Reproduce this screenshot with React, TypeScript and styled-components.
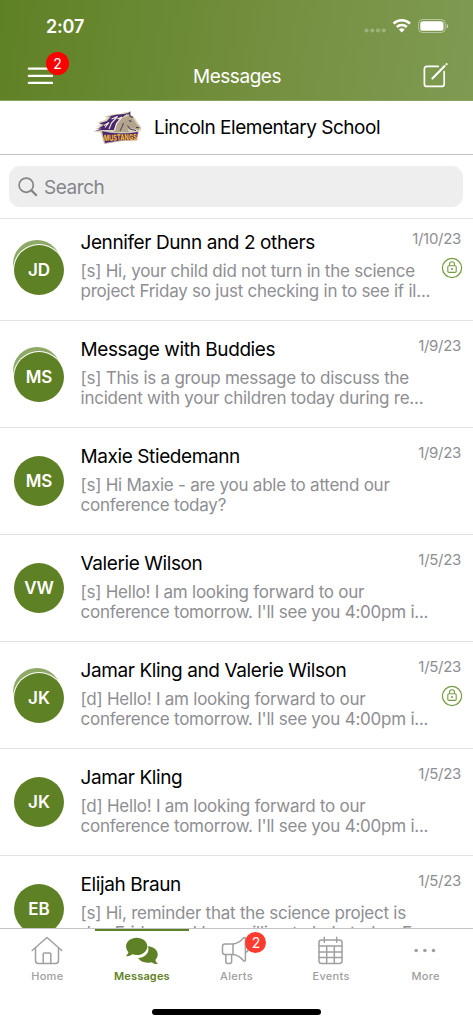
import React from 'react';
import styled, { createGlobalStyle } from 'styled-components';

interface IMessage {
  initials: string;
  title: string;
  date: string;
  lines: string[];
  group?: boolean;
  locked?: boolean;
}

const messages: IMessage[] = [
  {
    initials: 'JD',
    title: 'Jennifer Dunn and 2 others',
    date: '1/10/23',
    lines: [
      '[s] Hi, your child did not turn in the science',
      'project Friday so just checking in to see if il...',
    ],
    group: true,
    locked: true,
  },
  {
    initials: 'MS',
    title: 'Message with Buddies',
    date: '1/9/23',
    lines: [
      '[s] This is a group message to discuss the',
      'incident with your children today during re...',
    ],
    group: true,
  },
  {
    initials: 'MS',
    title: 'Maxie Stiedemann',
    date: '1/9/23',
    lines: ['[s] Hi Maxie - are you able to attend our', 'conference today?'],
  },
  {
    initials: 'VW',
    title: 'Valerie Wilson',
    date: '1/5/23',
    lines: [
      '[s] Hello! I am looking forward to our',
      "conference tomorrow. I'll see you 4:00pm i...",
    ],
  },
  {
    initials: 'JK',
    title: 'Jamar Kling and Valerie Wilson',
    date: '1/5/23',
    lines: [
      '[d] Hello! I am looking forward to our',
      "conference tomorrow. I'll see you 4:00pm i...",
    ],
    group: true,
    locked: true,
  },
  {
    initials: 'JK',
    title: 'Jamar Kling',
    date: '1/5/23',
    lines: [
      '[d] Hello! I am looking forward to our',
      "conference tomorrow. I'll see you 4:00pm i...",
    ],
  },
  {
    initials: 'EB',
    title: 'Elijah Braun',
    date: '1/5/23',
    lines: [
      '[s] Hi, reminder that the science project is',
      'due Friday and I am willing to help today. F...',
    ],
  },
];

const StatusIcons = () => (
  <svg width="86" height="18" viewBox="0 0 86 18" fill="none">
    <g fill="#fff" opacity="0.27">
      <circle cx="3.500" cy="13.500" r="2.100" />
      <circle cx="9.300" cy="13.500" r="2.100" />
      <circle cx="15" cy="13.500" r="2.100" />
      <circle cx="20.700" cy="13.500" r="2.100" />
    </g>
    <g stroke="#fff" strokeWidth="2.600">
      <path d="M30.600 6.600a11.800 11.800 0 0 1 16.400 0" />
      <path d="M33.800 10a7.200 7.200 0 0 1 10 0" />
    </g>
    <path d="M38.800 15.600l-2.900-3a4.200 4.200 0 0 1 5.800 0z" fill="#fff" />
    <rect x="55.600" y="2.500" width="26.600" height="13" rx="4" stroke="#fff" opacity="0.45" />
    <rect x="57.300" y="4.200" width="23.200" height="9.600" rx="2.600" fill="#fff" />
    <path d="M83.600 7v4.400c1-.4 1.500-1.200 1.500-2.200s-.5-1.800-1.500-2.200z" fill="#fff" opacity="0.6" />
  </svg>
);

const MenuIcon = () => (
  <svg width="27" height="18" viewBox="0 0 27 18" stroke="#fff" strokeWidth="2.200" strokeLinecap="round">
    <path d="M2.800 1.700H26M2.800 8.900H26M2.800 15.900H26" />
  </svg>
);

const ComposeIcon = () => (
  <svg width="26" height="26" viewBox="0 0 26 26" fill="none" stroke="#fff" strokeWidth="1.700" strokeLinecap="round">
    <path d="M16.200 3.400H4.900a2.500 2.500 0 0 0-2.500 2.500v15a2.500 2.500 0 0 0 2.500 2.500h14.800a2.500 2.500 0 0 0 2.500-2.500V8.600" />
    <path d="M10.400 15.600L22.600 3" strokeWidth="2.100" />
    <circle cx="24.500" cy="1.200" r="0.500" strokeWidth="1.200" />
  </svg>
);

const SchoolLogo = () => (
  <svg width="50" height="34" viewBox="0 0 50 34" overflow="visible">
    <path
      d="M0 20.500l6-2-4-.5 6-2.500-5-.3 6.500-2.700-5.500-1 8-2.500 2-2.500-3-.5 8-2.500 8-.8 6-1.700L37.500.8v3.500l3.500 1.500 3.500 5.500 4 5-.5 3-2.500 1.500-1 9-15 .3-18.500 3L7.500 21.500z"
      fill="#dcd3bd"
    />
    <path
      d="M2 20l7-2.500-4 .3 6-4-5-1.300 8-2.500 4-4.500-4 .2 9-2 8-.7 5-1.200L31 5l-4 3.500-4 5-2 5.500H9z"
      fill="#49276f"
    />
    <path d="M28 7.500l8-3 4 2.500 3 5 3.800 4.500-1.300 2.500-5-1.500-6 .2 1.500 3.300H21l2-7.500z" fill="#b3a58c" />
    <path d="M18.500 8l6-2.500-6 6.500-2.500 6M24.500 8l4.500-2-5.500 6.500-2 7M11 14.500l5-3-4 5" stroke="#eee7da" strokeWidth="1.200" fill="none" />
    <path d="M34.500 3.500l2.300-2v3.300l3.200 1.700M43 16.500l3.200.2M36 9.500l2.500 1" stroke="#4a3558" strokeWidth="1.100" fill="none" />
    <path d="M30.500 12l-1.500 4-2 4M34.500 14.500l2.500 3.500 6 1.500" stroke="#5c486b" strokeWidth="1.100" fill="none" />
    <path d="M8.500 19.700q19 4.300 37 .8l-1.800 8.500q-16-.3-32 3.500z" fill="#49276f" stroke="#dcd3bd" strokeWidth="0.700" />
    <LogoText x="27.300" y="29.500" textLength="33" lengthAdjust="spacingAndGlyphs" transform="rotate(-2 27 27)">
      MUSTANGS
    </LogoText>
  </svg>
);

const SearchIcon = () => (
  <svg width="20" height="20" viewBox="0 0 20 20" fill="none" stroke="#85858a" strokeLinecap="round">
    <circle cx="8.200" cy="8.200" r="7.100" strokeWidth="1.700" />
    <path d="M13.600 13.600l4.600 4.500" strokeWidth="2.200" />
  </svg>
);

const LockIcon = () => (
  <svg width="22" height="22" viewBox="0 0 22 22" fill="none" stroke="#759a3e">
    <circle cx="11" cy="11" r="9.600" strokeWidth="1.200" />
    <rect x="6.800" y="8.800" width="8.400" height="6.600" rx="1.200" strokeWidth="1.100" />
    <path d="M8.500 8.800V7.300a2.500 2.500 0 0 1 5 0v1.500" strokeWidth="1.100" />
    <circle cx="11" cy="12" r="0.600" fill="#759a3e" />
  </svg>
);

const HomeIcon = () => (
  <svg width="32" height="30" viewBox="0 0 32 30" fill="none" stroke="#a0a0a0" strokeWidth="1.500" strokeLinecap="round" strokeLinejoin="round">
    <path d="M1.200 15.500L16 2.500 30.800 15.500" />
    <path d="M4.500 12.700V25.500a3 3 0 0 0 3 3h17a3 3 0 0 0 3-3V12.700" />
    <path d="M12.200 28.500V18.900a1 1 0 0 1 1-1h5.600a1 1 0 0 1 1 1v9.600" />
  </svg>
);

const ChatIcon = () => (
  <svg width="34" height="30" viewBox="0 -1.500 34 30" fill="#5f8125">
    <path d="M22.500 9.800C28.500 10 32.700 13.600 32.700 18c0 2.200-.9 4.100-2.400 5.500.4 1.500 1.200 2.500 2.200 3.300.3.300.1.800-.3.800-2 0-4-.7-5.700-1.900-1.200.4-2.600.6-4 .6-4.200 0-7.700-1.900-9.300-4.700 6-.6 10.300-4.400 10.300-9.200 0-.9-.4-1.800-1-2.600z" />
    <path d="M11.700 1.300c6 0 10.600 3.800 10.600 8.600s-4.600 8.600-10.600 8.600c-1.500 0-2.900-.3-4.200-.7C5.800 19 3.800 19.700 1.700 19.700c-.5 0-.7-.5-.3-.8 1-.9 1.800-2.200 2.100-3.400C2 14 1.100 12 1.100 9.900c0-4.800 4.600-8.600 10.600-8.600z" />
  </svg>
);

const AlertIcon = () => (
  <svg width="32" height="30" viewBox="0 0 32 30" fill="none" stroke="#a0a0a0" strokeWidth="1.500" strokeLinejoin="round">
    <path d="M13 9H5a2.500 2.500 0 0 0-2.500 2.500v5.500A2.500 2.500 0 0 0 5 19.500h8z" />
    <path d="M13 9c4.500-.5 8-3 10.500-6 .8-.8 1.900-.5 1.900.5v21.800c0 1-1.100 1.300-1.900.5-2.500-3.300-6-5.800-10.500-6.300" />
    <path d="M5.800 19.500v7c0 1.200.8 2 1.800 2h2.200c1.100 0 1.800-.8 1.800-2v-7M26 12c2.800.3 2.800 4.700 0 5" />
  </svg>
);

const EventsIcon = () => (
  <svg width="26" height="30" viewBox="0.500 0 26 30" fill="none" stroke="#a0a0a0" strokeWidth="1.500" strokeLinecap="round">
    <rect x="1.500" y="5" width="23" height="23.500" rx="2.500" />
    <path d="M6.800 2.300v5M19.200 2.300v5M1.500 11h23M1.500 16.900h23M1.500 22.600h23M9.200 11v17.500M16.800 11v17.500" />
  </svg>
);

const MoreIcon = () => (
  <svg width="24" height="30" viewBox="0.800 0 24 30" fill="#a0a0a0">
    <circle cx="3" cy="15.500" r="1.800" />
    <circle cx="11.700" cy="15.500" r="1.800" />
    <circle cx="20.300" cy="15.500" r="1.800" />
  </svg>
);

const tabs = [
  { label: 'Home', icon: <HomeIcon /> },
  { label: 'Messages', icon: <ChatIcon />, active: true },
  { label: 'Alerts', icon: <AlertIcon />, badge: 2 },
  { label: 'Events', icon: <EventsIcon /> },
  { label: 'More', icon: <MoreIcon /> },
];

const MessageRow = ({ message }: { message: IMessage }) => (
  <Row>
    <AvatarBox $group={message.group}>
      {message.group && <AvatarShadow />}
      <Avatar>{message.initials}</Avatar>
    </AvatarBox>
    <RowBody>
      <RowTitle>{message.title}</RowTitle>
      {message.lines.map((line) => (
        <Preview key={line}>{line}</Preview>
      ))}
    </RowBody>
    <RowSide>
      <RowDate>{message.date}</RowDate>
      {message.locked && <LockIcon />}
    </RowSide>
  </Row>
);

const App = () => {
  return (
    <Screen>
      <GlobalStyle />
      <Header>
        <StatusBar>
          <Clock>2:07</Clock>
          <StatusIcons />
        </StatusBar>
        <NavBar>
          <MenuButton>
            <MenuIcon />
            <MenuBadge>2</MenuBadge>
          </MenuButton>
          <NavTitle>Messages</NavTitle>
          <ComposeButton>
            <ComposeIcon />
          </ComposeButton>
        </NavBar>
      </Header>
      <SchoolBar>
        <SchoolLogo />
        <SchoolName>Lincoln Elementary School</SchoolName>
      </SchoolBar>
      <SearchArea>
        <SearchBox>
          <SearchIcon />
          <SearchText>Search</SearchText>
        </SearchBox>
      </SearchArea>
      <List>
        {messages.map((message) => (
          <MessageRow key={message.title} message={message} />
        ))}
      </List>
      <TabBar>
        {tabs.map((tab) => (
          <Tab key={tab.label} $active={tab.active}>
            <TabIcon>
              {tab.icon}
              {tab.badge && <TabBadge>{tab.badge}</TabBadge>}
            </TabIcon>
            <TabLabel $active={tab.active}>{tab.label}</TabLabel>
          </Tab>
        ))}
      </TabBar>
      <HomeArea>
        <HomeIndicator />
      </HomeArea>
    </Screen>
  );
};

const GlobalStyle = createGlobalStyle`
  * {
    box-sizing: border-box;
  }

  body {
    margin: 0;
    background: #fff;
    font-family: Inter, 'Liberation Sans', sans-serif;
  }

  svg {
    display: block;
    flex-shrink: 0;
  }
`;

const Screen = styled.div`
  display: flex;
  flex-direction: column;
  width: 473px;
  height: 1024px;
  overflow: hidden;
  white-space: nowrap;
`;

const Header = styled.header`
  flex: none;
  height: 101px;
  color: #fff;
  background: linear-gradient(100deg, #5f8125 0%, #6b8a35 35%, #748f3f 55%, #7f9b52 100%);
  border-bottom: 1px solid #8aa55b;
`;

const StatusBar = styled.div`
  display: flex;
  justify-content: space-between;
  height: 51px;
  padding: 17px 24px 0 46px;
`;

const Clock = styled.div`
  font-size: 18px;
  font-weight: 600;
  letter-spacing: -0.2px;
  line-height: 20px;
`;

const NavBar = styled.div`
  display: grid;
  grid-template-columns: 1fr auto 1fr;
  height: 49px;
  padding: 0 25px 0 26px;
`;

const MenuButton = styled.div`
  position: relative;
  padding-top: 16px;
`;

const MenuBadge = styled.span`
  position: absolute;
  top: 1px;
  left: 20px;
  width: 23px;
  height: 23px;
  border-radius: 50%;
  background: #f00;
  font-size: 14px;
  line-height: 23px;
  text-align: center;
`;

const NavTitle = styled.div`
  padding-top: 14px;
  font-size: 19px;
  letter-spacing: -0.45px;
  line-height: 24px;
`;

const ComposeButton = styled.div`
  display: flex;
  justify-content: flex-end;
  padding-top: 12px;
`;

const SchoolBar = styled.div`
  flex: none;
  display: flex;
  align-items: center;
  justify-content: center;
  gap: 11px;
  height: 54px;
  border-bottom: 1px solid #c4c4c6;
`;

const LogoText = styled.text`
  fill: #f5b830;
  font-family: Inter, sans-serif;
  font-size: 8.5px;
  font-weight: 800;
  text-anchor: middle;
`;

const SchoolName = styled.div`
  padding-top: 1px;
  font-size: 19px;
  letter-spacing: -0.48px;
  line-height: 24px;
`;

const SearchArea = styled.div`
  flex: none;
  height: 64px;
  padding: 11px 10px 0 9px;
  border-bottom: 1px solid #e3e3e4;
`;

const SearchBox = styled.div`
  display: flex;
  align-items: center;
  gap: 6px;
  height: 41px;
  padding-left: 9px;
  border-radius: 11px;
  background: #eee;
`;

const SearchText = styled.span`
  padding-top: 1px;
  color: #85858a;
  font-size: 19px;
  letter-spacing: -0.45px;
`;

const List = styled.div`
  flex: 1;
  min-height: 0;
  overflow: hidden;
`;

const Row = styled.div`
  display: flex;
  height: 107px;
  padding: 17px 10px 0 14px;
  border-bottom: 1px solid #e3e3e4;

  &:first-child {
    height: 102px;
    padding-top: 12px;
  }
`;

const AvatarBox = styled.div<{ $group?: boolean }>`
  position: relative;
  flex: none;
  width: 66.5px;
  padding-top: ${(props) => (props.$group ? 14 : 11)}px;
`;

const AvatarShadow = styled.div`
  position: absolute;
  top: 9px;
  left: -1px;
  width: 48px;
  height: 48px;
  border-radius: 50%;
  background: #8ea866;
`;

const Avatar = styled.div`
  position: relative;
  width: 50px;
  height: 50px;
  border-radius: 50%;
  background: #5f8125;
  box-shadow: 0 0 0 1px #fff;
  color: #fff;
  font-size: 17px;
  font-weight: 600;
  line-height: 50px;
  text-align: center;
`;

const RowBody = styled.div`
  flex: 1;
  min-width: 0;
`;

const RowTitle = styled.div`
  margin-bottom: 6px;
  font-size: 19px;
  letter-spacing: -0.4px;
  line-height: 24px;
`;

const Preview = styled.div`
  color: #8e8e93;
  font-size: 17px;
  letter-spacing: -0.24px;
  line-height: 20px;
`;

const RowSide = styled.div`
  display: flex;
  flex-direction: column;
  align-items: flex-end;
  flex: none;
  gap: 9px;
  width: 60px;
  margin-top: -1px;
`;

const RowDate = styled.div`
  padding-right: 2px;
  color: #8e8e93;
  font-size: 15px;
  letter-spacing: -0.3px;
  line-height: 18px;
`;

const TabBar = styled.nav`
  flex: none;
  display: grid;
  grid-template-columns: repeat(5, 1fr);
  height: 58px;
  border-top: 1px solid #c4c4c6;
`;

const Tab = styled.div<{ $active?: boolean }>`
  display: flex;
  flex-direction: column;
  align-items: center;
  padding-top: 6px;
  color: ${(props) => (props.$active ? '#5f8125' : '#a0a0a0')};
  box-shadow: ${(props) => (props.$active ? 'inset 0 2px 0 #5f8125' : 'none')};
`;

const TabIcon = styled.div`
  position: relative;
`;

const TabBadge = styled.span`
  position: absolute;
  top: -3px;
  left: 25px;
  width: 21px;
  height: 21px;
  border-radius: 50%;
  background: #ff3b30;
  color: #fff;
  font-size: 14px;
  font-weight: 400;
  line-height: 21px;
  text-align: center;
`;

const TabLabel = styled.div<{ $active?: boolean }>`
  margin-top: 4px;
  font-size: 11px;
  font-weight: ${(props) => (props.$active ? 600 : 500)};
  letter-spacing: ${(props) => (props.$active ? 0.15 : 0.3)}px;
  line-height: 14px;
`;

const HomeArea = styled.div`
  flex: none;
  display: flex;
  justify-content: center;
  height: 38px;
  padding-top: 23px;
`;

const HomeIndicator = styled.div`
  width: 169px;
  height: 6px;
  border-radius: 3px;
  background: #000;
`;

export default App;
